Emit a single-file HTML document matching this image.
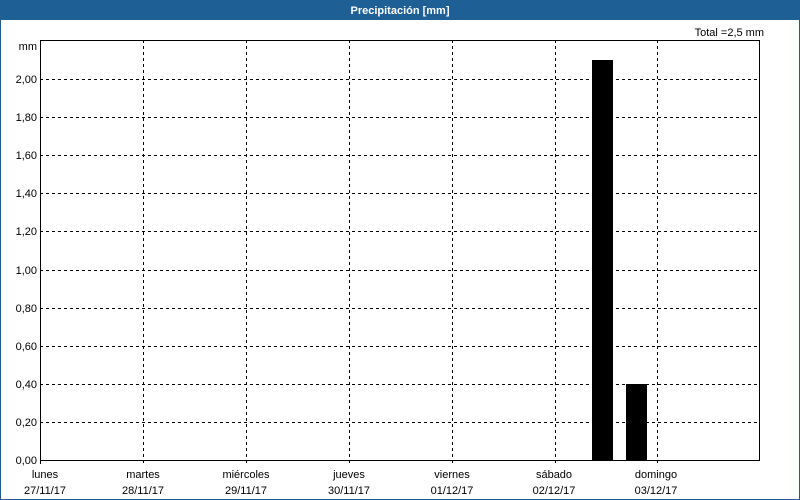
<!DOCTYPE html>
<html><head><style>
html,body{margin:0;padding:0;background:#fff}
svg{display:block}
text{font-family:"Liberation Sans",sans-serif;font-size:11px;fill:#000}
</style></head><body>
<svg width="800" height="500" xmlns="http://www.w3.org/2000/svg">
<rect x="0" y="0" width="800" height="500" fill="#fff"/>
<rect x="0.5" y="0.5" width="799" height="499" fill="none" stroke="#1e5f96"/>
<rect x="0" y="0" width="800" height="20" fill="#1e5f96"/>
<text x="400" y="14" text-anchor="middle" style="fill:#fff;font-weight:bold;font-size:11px">Precipitación [mm]</text>
<text x="764" y="36" text-anchor="end">Total =2,5 mm</text>
<text x="37" y="50" text-anchor="end">mm</text>
<g stroke="#000" stroke-dasharray="3,3" stroke-width="1">
<line x1="40" y1="79.5" x2="760" y2="79.5"/>
<line x1="40" y1="117.5" x2="760" y2="117.5"/>
<line x1="40" y1="155.5" x2="760" y2="155.5"/>
<line x1="40" y1="193.5" x2="760" y2="193.5"/>
<line x1="40" y1="231.5" x2="760" y2="231.5"/>
<line x1="40" y1="270.5" x2="760" y2="270.5"/>
<line x1="40" y1="308.5" x2="760" y2="308.5"/>
<line x1="40" y1="346.5" x2="760" y2="346.5"/>
<line x1="40" y1="384.5" x2="760" y2="384.5"/>
<line x1="40" y1="422.5" x2="760" y2="422.5"/>
<line x1="143.5" y1="40" x2="143.5" y2="466"/>
<line x1="246.5" y1="40" x2="246.5" y2="466"/>
<line x1="349.5" y1="40" x2="349.5" y2="466"/>
<line x1="452.5" y1="40" x2="452.5" y2="466"/>
<line x1="555.5" y1="40" x2="555.5" y2="466"/>
<line x1="657.5" y1="40" x2="657.5" y2="466"/>
</g>
<rect x="592" y="60" width="21" height="400" fill="#000"/>
<rect x="626" y="384" width="21" height="76" fill="#000"/>
<rect x="40.5" y="40.5" width="719" height="420" fill="none" stroke="#000"/>
<line x1="40.5" y1="460" x2="40.5" y2="464" stroke="#000"/>
<g text-anchor="end">
<text x="37" y="83">2,00</text>
<text x="37" y="121">1,80</text>
<text x="37" y="159">1,60</text>
<text x="37" y="197">1,40</text>
<text x="37" y="235">1,20</text>
<text x="37" y="274">1,00</text>
<text x="37" y="312">0,80</text>
<text x="37" y="350">0,60</text>
<text x="37" y="388">0,40</text>
<text x="37" y="426">0,20</text>
<text x="37" y="464">0,00</text>
</g>
<g text-anchor="middle">
<text x="45" y="478">lunes</text><text x="45" y="494">27/11/17</text>
<text x="143" y="478">martes</text><text x="143" y="494">28/11/17</text>
<text x="246" y="478">miércoles</text><text x="246" y="494">29/11/17</text>
<text x="349" y="478">jueves</text><text x="349" y="494">30/11/17</text>
<text x="452" y="478">viernes</text><text x="452" y="494">01/12/17</text>
<text x="554" y="478">sábado</text><text x="554" y="494">02/12/17</text>
<text x="656" y="478">domingo</text><text x="656" y="494">03/12/17</text>
</g>
</svg>
</body></html>
